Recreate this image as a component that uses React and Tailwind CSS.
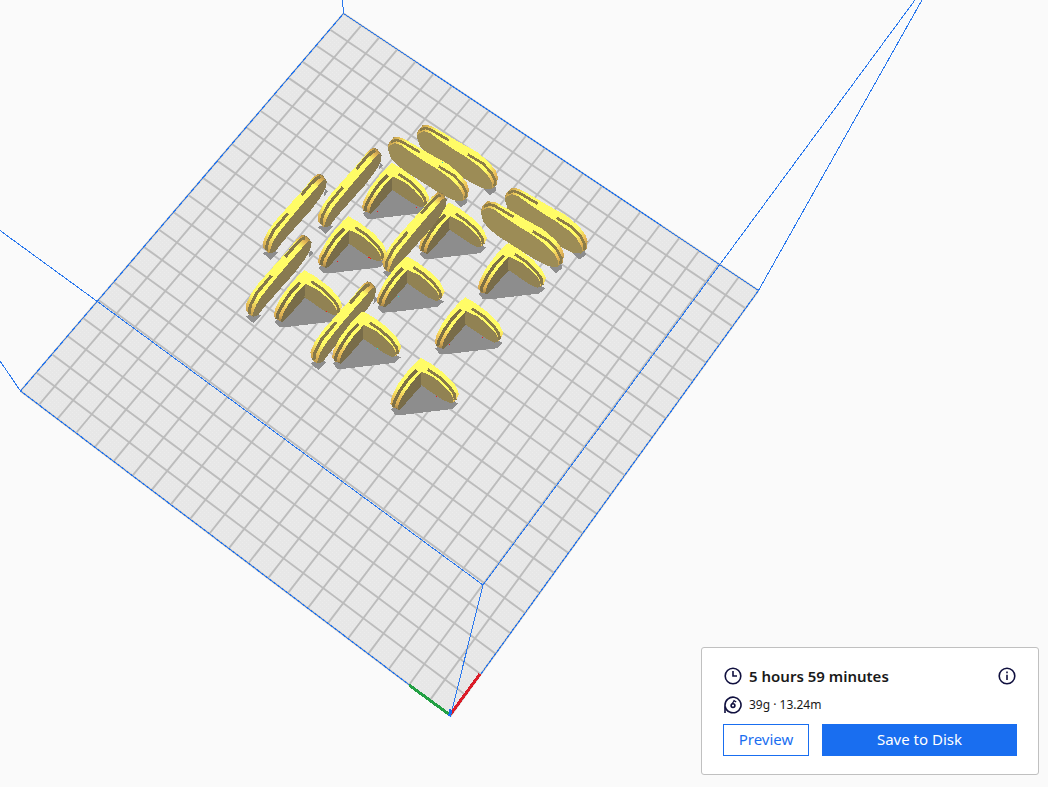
const CELLS = 22;
const ORIGIN = [450.5, 716];
const RIGHT = [758.5, 290.5];
const BACK = [343.5, 13.5];
const LEFT = [20.5, 391];

// Perspective mapping of the unit square onto the build plate.
function makeProjection([x0, y0], [x1, y1], [x2, y2], [x3, y3]) {
  const dx1 = x1 - x2, dx2 = x3 - x2, dx3 = x0 - x1 + x2 - x3;
  const dy1 = y1 - y2, dy2 = y3 - y2, dy3 = y0 - y1 + y2 - y3;
  const det = dx1 * dy2 - dx2 * dy1;
  const g = (dx3 * dy2 - dx2 * dy3) / det;
  const h = (dx1 * dy3 - dx3 * dy1) / det;
  return (u, v) => {
    const w = g * u + h * v + 1;
    return [
      ((x1 - x0 + g * x1) * u + (x3 - x0 + h * x3) * v + x0) / w,
      ((y1 - y0 + g * y1) * u + (y3 - y0 + h * y3) * v + y0) / w,
    ];
  };
}

const project = makeProjection(ORIGIN, RIGHT, BACK, LEFT);
const gridPath = Array.from({ length: CELLS + 1 }, (_, i) => {
  const t = i / CELLS;
  const p = (u, v) => project(u, v).map((n) => n.toFixed(2)).join(",");
  return `M${p(t, 0)}L${p(t, 1)}M${p(0, t)}L${p(1, t)}`;
}).join("");

// Each model is drawn at three units per pixel around its own anchor point.
const models = [
  { kind: "slope", x: 417.3, y: 125, s: 1 },
  { kind: "slope", x: 388.3, y: 137, s: 1 },
  { kind: "rise", x: 372.7, y: 147.7, s: 1 },
  { kind: "corner", x: 392, y: 163, s: 0.98 },
  { kind: "slope", x: 505.3, y: 188, s: 1.02 },
  { kind: "slope", x: 481.3, y: 201.3, s: 1.025 },
  { kind: "rise", x: 317.8, y: 173.7, s: 1 },
  { kind: "corner", x: 449.3, y: 202.6, s: 0.99 },
  { kind: "corner", x: 348.6, y: 216.3, s: 1 },
  { kind: "rise", x: 437.8, y: 192, s: 1.01 },
  { kind: "corner", x: 508.3, y: 243, s: 0.99 },
  { kind: "corner", x: 406.9, y: 256.2, s: 0.99 },
  { kind: "rise", x: 302.3, y: 234.7, s: 1.03 },
  { kind: "corner", x: 304.5, y: 270.2, s: 1 },
  { kind: "corner", x: 465.3, y: 297.3, s: 1 },
  { kind: "rise", x: 367, y: 281.3, s: 1.03 },
  { kind: "corner", x: 363, y: 311.3, s: 1.01 },
  { kind: "corner", x: 421, y: 358, s: 1 },
];

const shapes = {
  rise: {
    anchor: [398, 98],
    shadow: "M233 336L256 356L278 334L264 325ZM416 166L430 151L420 143Z",
    parts: (
      <>
        <path fill="#887a51" d="M398 98L412 102L425 120L421 142L406 169L376 209L346 242L316 276L291 304L270 332L256 337L244 331L235 320L233 304L246 274L271 239L296 211L326 177L356 144L381 112Z" />
        <path fill="url(#riseBand)" d="M252 336L244 331L235 320L233 304L246 274L271 239L296 211L326 177L356 144L381 112L398 98L412 104L420 115L410 121L391 144L366 172L328 217L301 250L278 279L263 304L257 320Z" />
        <path fill="none" stroke="#86784a" strokeWidth="9" d="M243 328L247 303L266 267L308 217M349 162L376 130L396 111L406 107" />
      </>
    ),
  },
  slope: {
    anchor: [112, 30],
    shadow: "M116 80L126 96L140 104L130 82ZM310 222L330 240L350 226L345 212Z",
    parts: (
      <>
        <path fill="#9c8c56" d="M111 65L113 48L128 31L152 32L185 51L240 83L290 110L328 142L348 168L354 186L351 209L334 223L308 220L270 201L210 163L160 131L135 111L118 90Z" />
        <path fill="url(#slopeBand)" d="M112 59L114 46L130 30L152 32L190 53L240 83L290 110L328 142L348 168L354 186L351 209L337 218L336 202L323 180L298 155L260 127L220 103L180 76L150 54L132 48L120 54Z" />
        <path fill="none" stroke="#8c7c48" strokeWidth="8" d="M120 45L136 39L152 44L207 76M263 118L308 145L334 173L346 196L344 213" />
      </>
    ),
  },
  corner: {
    anchor: [152, 353],
    shadow: "M62 507L76 524L102 523L246 506L264 490L245 480L155 425L85 490Z",
    parts: (
      <>
        <path fill="#786c49" d="M154 388L153 436L127 465L102 494L86 509L76 504L85 470L120 415Z" />
        <path fill="#918253" d="M153 386L152 434L185 457L215 477L240 489L254 484L256 468L225 425L185 395Z" />
        <path fill="url(#cornerBand)" d="M152 353L185 372L225 402L254 433L266 460L260 475L248 486L250 476L241 458L217 433L190 411L154 394L124 427L101 460L88 482L82 505L70 503L60 490L64 470L84 430L114 390L137 365Z" />
        <path fill="none" stroke="#7c6f46" strokeWidth="9.500" d="M69 500L73 482L90 450L112 418L139 390" />
        <path fill="none" stroke="#887a49" strokeWidth="8.500" d="M172 387L205 409L236 438L252 461L255 480" />
      </>
    ),
  },
};

const place = ({ kind, x, y, s }) => {
  const [ax, ay] = shapes[kind].anchor;
  return `translate(${x} ${y}) scale(${s / 3}) translate(${-ax} ${-ay})`;
};

function BuildPlate() {
  return (
    <svg className="absolute inset-0" width="1048" height="787" viewBox="0 0 1048 787" aria-hidden="true">
      <defs>
        <pattern id="plateDots" width="4" height="4" patternUnits="userSpaceOnUse">
          <rect width="4" height="4" fill="#e7e7e7" />
          <rect width="1" height="1" fill="#ececec" />
          <rect x="2" y="2" width="1" height="1" fill="#ececec" />
        </pattern>
        <linearGradient id="riseBand" gradientUnits="userSpaceOnUse" x1="238" y1="332" x2="412" y2="102">
          <stop offset="0" stopColor="#b49148" />
          <stop offset=".08" stopColor="#e2b855" />
          <stop offset=".2" stopColor="#fffc66" />
          <stop offset=".86" stopColor="#fffc66" />
          <stop offset=".94" stopColor="#e3b655" />
          <stop offset="1" stopColor="#a88748" />
        </linearGradient>
        <linearGradient id="slopeBand" gradientUnits="userSpaceOnUse" x1="112" y1="42" x2="350" y2="212">
          <stop offset="0" stopColor="#b18d48" />
          <stop offset=".08" stopColor="#e8c35a" />
          <stop offset=".16" stopColor="#fffc66" />
          <stop offset=".82" stopColor="#fffc66" />
          <stop offset=".92" stopColor="#eabb58" />
          <stop offset="1" stopColor="#b08f4c" />
        </linearGradient>
        <linearGradient id="cornerBand" gradientUnits="userSpaceOnUse" x1="152" y1="355" x2="144" y2="508">
          <stop offset="0" stopColor="#fffc66" />
          <stop offset=".58" stopColor="#fffc66" />
          <stop offset=".76" stopColor="#f0c95c" />
          <stop offset=".9" stopColor="#d9ab52" />
          <stop offset="1" stopColor="#a18349" />
        </linearGradient>
      </defs>
      <polygon points="450.5,716 758.5,290.5 343.5,13.500 20.500,391" fill="url(#plateDots)" />
      <path d={gridPath} fill="none" stroke="#bcbcbc" strokeWidth="1.900" />
      <g fill="none" stroke="#2a78ee" strokeWidth="1" shapeRendering="crispEdges">
        <path d="M450.500 716L758.500 290.500L343.500 13.500L20.500 391Z" />
        <path d="M343.500 13.500L342.500 0M20.500 391L0 361M758.500 290.500L922 0" />
      </g>
      <g shapeRendering="crispEdges">
        {models.map((m, i) => (
          <path key={i} fill="#8d8d8d" d={shapes[m.kind].shadow} transform={place(m)} />
        ))}
        {models.map((m, i) => (
          <g key={i} transform={place(m)}>{shapes[m.kind].parts}</g>
        ))}
        <path fill="#f01818" d="M377 211h1v1h-1zM416 207h1v1h-1zM368 257h2v1h-2zM370 258h1v1h-1zM337 261h1v1h-1zM326 311h1v1h-1zM449 344h1v1h-1zM482 337h1v1h-1zM436 396h1v1h-1z" />
        <path fill="#19d8d0" d="M442 162h1v1h-1zM377 348h1v1h-1zM398 296h1v1h-1z" />
      </g>
      <path d="M0 230.500L96 300.500L483 585L719.500 265L915 0M483 585L450.500 716" fill="none" stroke="#2a78ee" strokeWidth="1" shapeRendering="crispEdges" />
      <g fill="none" strokeWidth="3" shapeRendering="crispEdges">
        <path d="M450 715L409 685" stroke="#23a044" />
        <path d="M450 715L480 674" stroke="#dc1c28" />
        <path d="M449.500 716.500L451 709.500" stroke="#196ef0" />
      </g>
    </svg>
  );
}

function ClockIcon() {
  return (
    <svg className="size-[18px] shrink-0" viewBox="0 0 18 18" fill="none" stroke="#10103f" strokeWidth="1.600" aria-hidden="true">
      <circle cx="9" cy="9" r="7.800" />
      <path d="M9 4v5h4" />
    </svg>
  );
}

function SpoolIcon() {
  return (
    <svg className="size-[18px] shrink-0" viewBox="0 0 18 18" fill="none" stroke="#10103f" strokeWidth="1.600" aria-hidden="true">
      <path d="M1 17V9a8 7.800 0 1 1 4.500 7" />
      <path d="M1.200 10.500Q2 14.500 5.800 16.100" />
      <circle cx="9" cy="9.600" r="1.900" />
      <path d="M7.900 8L10.300 4.600M9.500 4.200L12.200 6" strokeWidth="1.300" />
    </svg>
  );
}

function InfoIcon() {
  return (
    <svg className="size-[18px] shrink-0" viewBox="0 0 18 18" fill="none" stroke="#10103f" strokeWidth="1.600" aria-hidden="true">
      <circle cx="9" cy="9" r="7.800" />
      <path d="M9 7.800V13M9 4.500v1.800" />
    </svg>
  );
}

function PrintSummary() {
  return (
    <section className="relative h-[128px] w-[338px] rounded-[3px] border border-[#c0c0c0] bg-white px-[21px] pt-[18px] font-['Noto_Sans',sans-serif] text-[#191919]">
      <div className="flex h-[20px] items-center px-[1px]">
        <ClockIcon />
        <h1 className="ml-[7px] grow whitespace-nowrap pb-px text-[15px] font-semibold leading-5">5 hours 59 minutes</h1>
        <InfoIcon />
      </div>
      <div className="mt-[9px] flex h-[20px] items-center pl-[1px]">
        <SpoolIcon />
        <p className="ml-[7px] whitespace-nowrap text-[12px] leading-5">39g · 13.24m</p>
      </div>
      <div className="mt-[9px] flex gap-[13px]">
        <button className="h-[32px] w-[86px] border border-[#196ef0] bg-white pb-[2px] text-[15px] leading-none text-[#196ef0]">Preview</button>
        <button className="h-[32px] w-[195px] bg-[#196ef0] pb-[2px] text-[15px] leading-none text-white">Save to Disk</button>
      </div>
    </section>
  );
}

export default function App() {
  return (
    <main className="relative flex h-[787px] w-[1048px] items-end justify-end overflow-hidden bg-[#fafafa] pb-[12px] pr-[9px]">
      <BuildPlate />
      <PrintSummary />
    </main>
  );
}
